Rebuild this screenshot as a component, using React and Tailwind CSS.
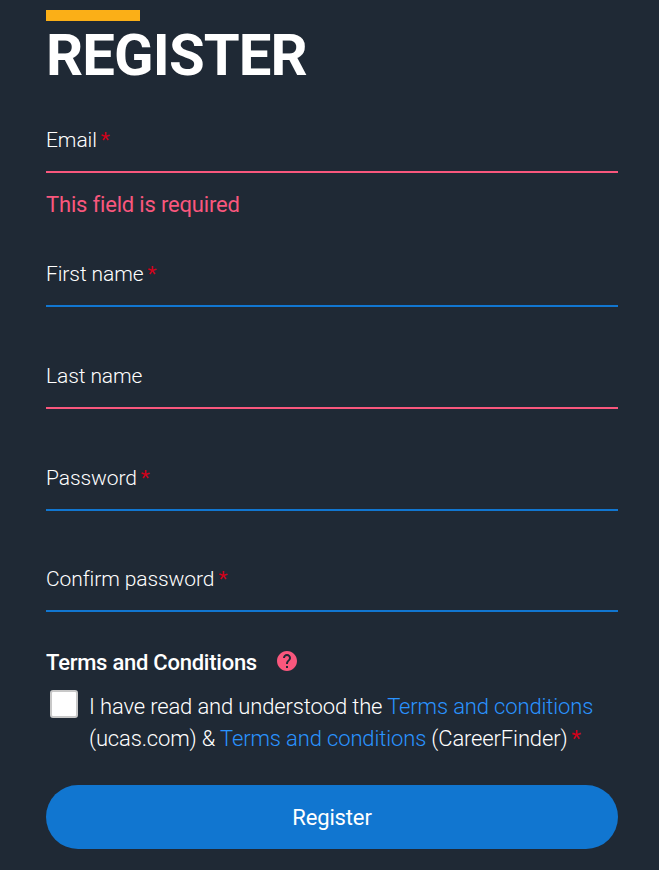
const Star = () => <span className="ml-[4px] font-normal text-[#d0021b]">*</span>;

function Field({ label, required, invalid, error, className = '' }) {
  return (
    <div className={className}>
      <label className="block h-[32px] text-[21px] leading-[32px] font-light tracking-[-0.09px] whitespace-pre">
        {label}
        {required && <Star />}
      </label>
      <div className={`mt-[15px] h-[2px] ${invalid ? 'bg-[#f9577d]' : 'bg-[#1176d0]'}`} />
      {error && <p className="mt-[16px] text-[22px] leading-[32px] tracking-[-0.18px] text-[#f9577d]">{error}</p>}
    </div>
  );
}

export default function App() {
  return (
    <main className="h-[870px] w-[659px] bg-[#1f2935] pt-[10px] pr-[41px] pl-[46px] font-['Roboto',sans-serif] text-white">
      <div className="h-[11px] w-[94px] bg-[#fbaf17]" />
      <h1 className="mt-[2px] h-[64px] text-[58px] leading-[64px] font-bold tracking-[-0.85px]">REGISTER</h1>
      <form>
        <Field label="Email" required invalid error="This field is required" className="mt-[37px]" />
        <Field label="First name" required className="mt-[37px]" />
        <Field label="Last name" invalid className="mt-[53px]" />
        <Field label="Password" required className="mt-[53px]" />
        <Field label="Confirm password" required className="mt-[52px]" />
        <div className="mt-[35px] flex h-[32px] items-center">
          <span className="text-[22px] leading-[32px] font-medium tracking-[-0.25px]">Terms and Conditions</span>
          <svg className="mb-[4px] ml-[18px] h-[24px] w-[24px] fill-[#f9577d]" viewBox="0 0 24 24">
            <path d="M12 2C6.48 2 2 6.48 2 12s4.48 10 10 10 10-4.48 10-10S17.52 2 12 2zm1 17h-2v-2h2v2zm2.07-7.75l-.9.92C13.45 12.9 13 13.5 13 15h-2v-.5c0-1.1.45-2.1 1.17-2.83l1.24-1.26c.37-.36.59-.86.59-1.41 0-1.1-.9-2-2-2s-2 .9-2 2H8c0-2.21 1.79-4 4-4s4 1.79 4 4c0 .88-.36 1.68-.93 2.25z" />
          </svg>
        </div>
        <div className="mt-[11px] flex">
          <span className="ml-[4px] h-[28px] w-[28px] shrink-0 rounded-[3px] border-2 border-[#c8c8c8] bg-white" />
          <p className="mt-[1px] ml-[11px] text-[22px] leading-[32px] font-light tracking-[-0.14px] whitespace-nowrap">
            I have read and understood the <a className="text-[#2a93ff]">Terms and conditions</a>
            <br />
            (ucas.com) &amp; <a className="text-[#2a93ff]">Terms and conditions</a> (CareerFinder)<Star />
          </p>
        </div>
        <button type="button" className="mt-[30px] block h-[64px] w-full rounded-full bg-[#1176d0] pt-[2px] text-[22px] leading-[32px] tracking-[-0.15px]">
          Register
        </button>
      </form>
    </main>
  );
}
